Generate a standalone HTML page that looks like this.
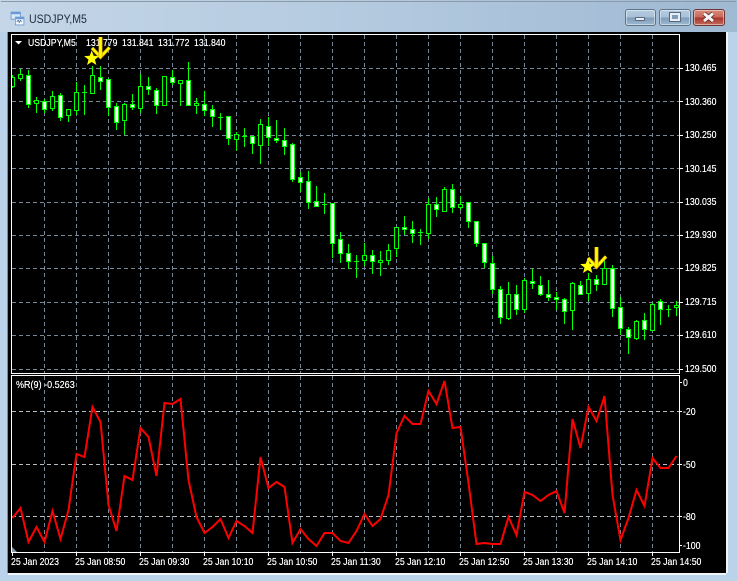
<!DOCTYPE html>
<html><head><meta charset="utf-8"><style>
html,body{margin:0;padding:0;width:737px;height:581px;overflow:hidden;background:#bad2ea}
#win{position:absolute;left:0;top:0;width:737px;height:581px;background:linear-gradient(90deg,#c4d6e8 0,#b5cbe0 45%,#9fb9d3 100%);overflow:hidden}
#win:before{content:"";position:absolute;left:0;top:32px;width:737px;height:549px;background:#bad2ea}
#top{position:absolute;left:1px;top:1px;width:735px;height:1px;background:#8a9aa8}
#title{position:absolute;left:29px;top:12px;font:12px/14px "Liberation Sans",sans-serif;color:#1c2a3c;transform:scaleX(.88);transform-origin:0 0}
.b{position:absolute;top:9px;height:15px;border:1px solid #5f7488;border-radius:3px;box-shadow:inset 0 0 0 1px rgba(255,255,255,.45);background:linear-gradient(#b5cde2 0,#a7c0d8 48%,#7f9cb8 52%,#9db8d0 100%)}
#min{left:625px;width:29px}#max{left:659px;width:30px}
#cl{left:693px;width:30px;border-color:#6d3535;background:linear-gradient(#d78a7c 0,#c8695a 48%,#a8342a 52%,#c46a5c 100%)}
#ch{position:absolute;left:8px;top:32px;width:718px;height:541px;background:#000;box-shadow:-1px 0 0 #7f8c98,2px 0 0 #f2f5f8,0 2px 0 #f2f5f8}
svg{position:absolute;left:0;top:0}
.t{position:absolute;font:10.5px/12px "Liberation Sans",sans-serif;color:#fff;white-space:pre;transform:scaleX(.83);transform-origin:0 0;text-shadow:0 0 .4px #fff}
</style></head><body><div id="win">
<div id="top"></div>
<svg width="15" height="15" style="left:9.500px;top:10.500px" viewBox="0 0 21 21"><rect x="1.500" y="1.500" width="13" height="10" fill="#d8e8f8" stroke="#5f8fc8"/><rect x="2" y="2" width="12" height="2.500" fill="#6a9ad8"/><rect x="7.500" y="8.500" width="12" height="11" fill="#eef5fc" stroke="#5f8fc8"/><rect x="8" y="9" width="11" height="2.500" fill="#6a9ad8"/><path d="M9.500 15l2-2 1.500 3 1.500-3 2 2" fill="none" stroke="#3a6aa8"/></svg>
<div id="title">USDJPY,M5</div>
<div class="b" id="min"><div style="position:absolute;left:9px;top:7px;width:8px;height:2px;background:#e8eef4;border:1px solid #55687c;border-radius:1px"></div></div>
<div class="b" id="max"><div style="position:absolute;left:10px;top:3px;width:6px;height:4px;border:2px solid #e8eef4;outline:1px solid #55687c;background:#7f9cb8"></div></div>
<div class="b" id="cl"><svg width="30" height="15"><path d="M10 3.500l9 7.500M19 3.500l-9 7.500" stroke="#5a2a2a" stroke-width="4.500"/><path d="M10 3.500l9 7.500M19 3.500l-9 7.500" stroke="#f4f4f4" stroke-width="3"/></svg></div>
<div id="ch"></div>
<svg id="s" width="737" height="581"></svg>
<div class="t" style="left:27.500px;top:37px">USDJPY,M5</div>
<div class="t" style="left:85.500px;top:37px">131.779</div>
<div class="t" style="left:121.500px;top:37px">131.841</div>
<div class="t" style="left:157.500px;top:37px">131.772</div>
<div class="t" style="left:193.500px;top:37px">131.840</div>
<div class="t" style="left:16px;top:379px;transform:scaleX(.86)">%R(9) -0.5263</div>
<svg width="737" height="581">
<path d="M92 48L100.500 57 109.500 47.500" fill="none" stroke="#d69a00" stroke-width="3.600"/><path d="M92 48L100.500 57 109.500 47.500" fill="none" stroke="#ffff00" stroke-width="2.200"/><rect x="98.500" y="37" width="4" height="20" fill="#d69a00"/><rect x="99.200" y="37" width="2.600" height="20" fill="#ffff00"/><path d="M91.700 50.500l2 5.300 5.600.3-4.400 3.500 1.500 5.400-4.700-3-4.700 3 1.500-5.400-4.400-3.500 5.600-.3z" fill="#ffff00"/>
<path d="M588 258L596.500 267 606 256.500" fill="none" stroke="#d69a00" stroke-width="3.600"/><path d="M588 258L596.500 267 606 256.500" fill="none" stroke="#ffff00" stroke-width="2.200"/><rect x="594.500" y="247" width="4" height="20" fill="#d69a00"/><rect x="595.200" y="247" width="2.600" height="20" fill="#ffff00"/><path d="M587.700 258.500l2 5.300 5.600.3-4.400 3.500 1.500 5.400-4.700-3-4.700 3 1.500-5.400-4.400-3.500 5.600-.3z" fill="#ffff00"/>
</svg>
<div class="t" style="left:685px;top:62px">130.465</div>
<div class="t" style="left:685px;top:96px">130.360</div>
<div class="t" style="left:685px;top:129px">130.250</div>
<div class="t" style="left:685px;top:163px">130.145</div>
<div class="t" style="left:685px;top:196px">130.035</div>
<div class="t" style="left:685px;top:229px">129.930</div>
<div class="t" style="left:685px;top:262px">129.825</div>
<div class="t" style="left:685px;top:296px">129.715</div>
<div class="t" style="left:685px;top:329px">129.610</div>
<div class="t" style="left:685px;top:363px">129.500</div>
<div class="t" style="left:683px;top:377px">0</div>
<div class="t" style="left:683px;top:406px">-20</div>
<div class="t" style="left:683px;top:459px">-50</div>
<div class="t" style="left:683px;top:511px">-80</div>
<div class="t" style="left:683px;top:540px">-100</div>
<div class="t" style="left:11px;top:556px">25 Jan 2023</div>
<div class="t" style="left:75px;top:556px">25 Jan 08:50</div>
<div class="t" style="left:139px;top:556px">25 Jan 09:30</div>
<div class="t" style="left:203px;top:556px">25 Jan 10:10</div>
<div class="t" style="left:267px;top:556px">25 Jan 10:50</div>
<div class="t" style="left:331px;top:556px">25 Jan 11:30</div>
<div class="t" style="left:395px;top:556px">25 Jan 12:10</div>
<div class="t" style="left:459px;top:556px">25 Jan 12:50</div>
<div class="t" style="left:523px;top:556px">25 Jan 13:30</div>
<div class="t" style="left:587px;top:556px">25 Jan 14:10</div>
<div class="t" style="left:651px;top:556px">25 Jan 14:50</div>
</div>
<script>
var C="75 77 86 88 0|69 74 78 81 0|70 75 104 108 1|97 100 103 113 0|99 101 109 113 1|91 96 108 111 0|93 95 117 121 1|109 109 115 122 0|82 92 110 115 0|85 92 93 115 2|66 75 93 94 0|66 77 81 90 1|79 79 107 116 1|103 106 122 130 1|103 104 120 135 0|94 104 107 110 1|74 86 108 113 0|77 86 89 95 1|88 90 105 114 1|76 76 105 105 0|70 77 82 85 1|80 80 83 106 0|62 80 105 106 1|98 103 105 114 0|91 104 110 116 1|105 109 116 127 1|113 117 117 130 2|116 116 138 145 1|132 134 139 151 0|128 136 136 147 2|136 136 143 154 1|119 124 145 164 0|117 126 137 146 1|120 138 140 143 1|128 140 146 155 1|143 144 179 182 1|172 177 182 192 1|171 181 202 209 1|186 201 206 207 1|193 204 204 214 2|203 203 243 258 1|232 239 253 263 1|244 253 261 269 1|255 261 261 278 2|243 255 260 266 0|250 255 261 274 1|251 260 262 276 0|244 250 260 265 0|227 227 248 257 0|216 227 229 235 1|221 229 233 243 1|229 232 232 245 2|198 204 233 239 0|197 204 209 217 1|187 189 211 212 0|184 189 207 213 1|196 204 207 210 0|202 202 221 228 1|221 221 243 247 1|243 243 262 268 1|256 263 289 294 1|286 289 317 324 1|282 294 318 320 0|285 294 309 315 1|278 280 309 313 0|269 281 283 289 1|276 285 294 296 1|280 294 297 301 1|292 297 299 310 1|298 299 311 324 1|282 283 310 330 0|281 285 294 295 1|273 279 293 301 0|275 279 284 291 1|260 268 284 285 0|265 268 308 317 1|297 307 328 335 1|327 329 337 354 1|320 321 338 340 0|313 320 329 340 1|303 304 330 330 0|299 301 309 325 1|305 309 309 317 2|301 305 307 316 0".split("|");
var R=[518,508,542,527,542,511,539,510,454,457,407,422,505,531,476,480,428,437,476,403,404,399,480,517,533,527,519,538,521,526,533,457,488,482,487,543,529,539,546,533,533,541,543,531,514,526,519,495,433,416,424,424,391,404,381,428,427,483,544,543,544,544,517,535,492,495,501,495,491,513,419,448,407,421,396,495,540,518,490,506,458,468,468,456];
var h='<defs><clipPath id="c"><rect x="12" y="35" width="667" height="338"/></clipPath><clipPath id="d"><rect x="12" y="377" width="667" height="175"/></clipPath></defs>';
var g='';
[44,76,108,140,172,204,236,268,300,332,364,396,428,460,492,524,556,588,620,652].forEach(function(x){g+='<path d="M'+(x+.5)+' 35V373M'+(x+.5)+' 376V552" stroke="#778899" stroke-dasharray="4 3" shape-rendering="crispEdges"/>'});
[68,101,135,168,202,235,268,302,335,369].forEach(function(y){g+='<path d="M12 '+(y+.5)+'H680" stroke="#778899" stroke-dasharray="4 3" shape-rendering="crispEdges"/><path d="M680 '+(y+.5)+'H683" stroke="#fff" shape-rendering="crispEdges"/>'});
[411,464,516].forEach(function(y){g+='<path d="M12 '+(y+.5)+'H680" stroke="#b4bcc4" stroke-dasharray="4 3" shape-rendering="crispEdges"/><path d="M680 '+(y+.5)+'H682" stroke="#fff" shape-rendering="crispEdges"/>'});
[382,545].forEach(function(y){g+='<path d="M680 '+(y+.5)+'H682" stroke="#fff" shape-rendering="crispEdges"/>'});
[12,76,140,204,268,332,396,460,524,588,652].forEach(function(x){g+='<path d="M'+(x+.5)+' 552V556" stroke="#fff" shape-rendering="crispEdges"/>'});
h+=g;
var cs='<g clip-path="url(#c)" shape-rendering="crispEdges">';
C.forEach(function(s,i){var a=s.split(" ").map(Number),x=12+8*i;
cs+='<path d="M'+(x+.5)+' '+a[0]+'V'+a[3]+'" stroke="#00ff00"/>';
if(a[4]==2){cs+='<path d="M'+(x-2)+' '+(a[1]+.5)+'h5" stroke="#00ff00"/>'}
else{cs+='<rect x="'+(x-1.5)+'" y="'+(a[1]+.5)+'" width="4" height="'+(a[2]-a[1])+'" fill="'+(a[4]?'#fff':'#000')+'" stroke="#00ff00"/>'}
});
h+=cs+'</g>';
h+='<polyline clip-path="url(#d)" fill="none" stroke="#ff0000" stroke-width="2" stroke-linejoin="miter" points="'+R.map(function(y,i){return (12.5+8*i)+','+y}).join(' ')+'"/>';
h+='<path d="M12 547l5 5h-5z" fill="#8a98a8"/>';
h+='<path d="M15 41h7l-3.500 3.500z" fill="#fff"/>';
h+='<rect x="11.500" y="34.500" width="668" height="339" fill="none" stroke="#fff"/><rect x="11.500" y="375.500" width="668" height="177" fill="none" stroke="#fff"/>';
document.getElementById('s').innerHTML=h;
</script>
</body></html>
